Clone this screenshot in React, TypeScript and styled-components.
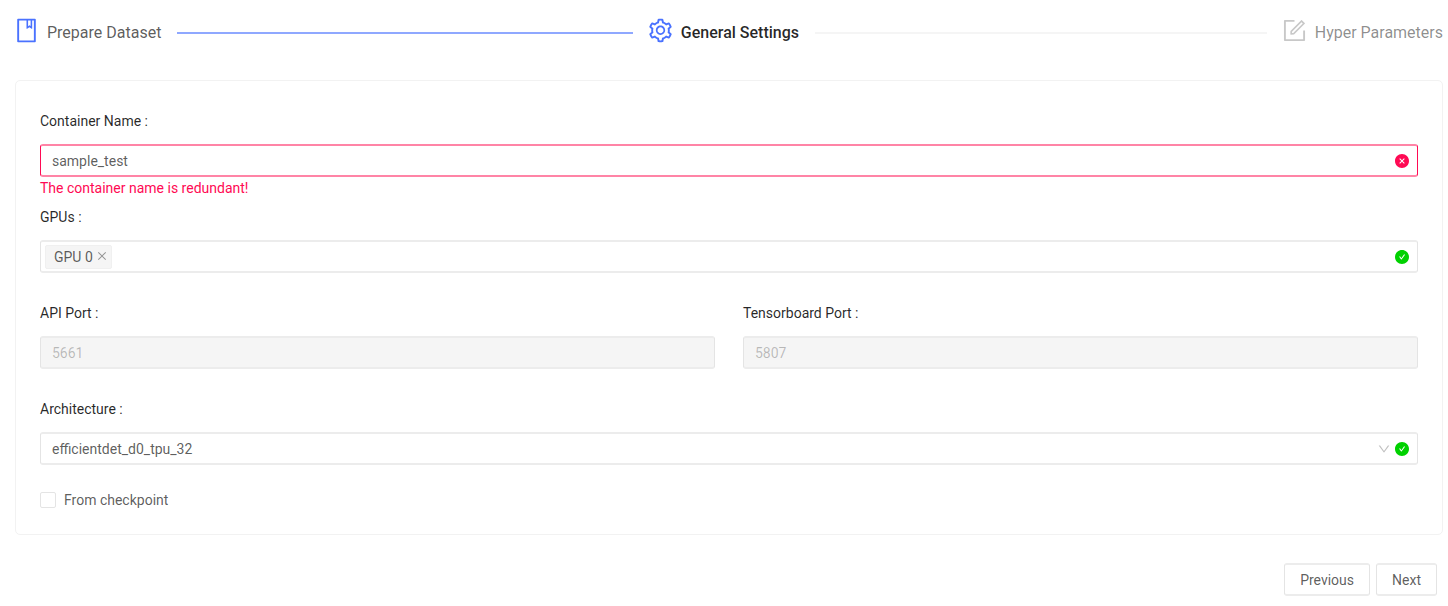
import React from 'react'
import styled, { createGlobalStyle } from 'styled-components'
import {
    AiFillCheckCircle,
    AiFillCloseCircle,
    AiOutlineBook,
    AiOutlineClose,
    AiOutlineDown,
    AiOutlineForm,
    AiOutlineSetting,
} from 'react-icons/ai'

const GlobalStyle = createGlobalStyle`
    * { box-sizing: border-box; }
    body {
        margin: 0;
        background: #fff;
        font-family: Roboto, "Liberation Sans", sans-serif;
        font-size: 14px;
        line-height: 22px;
        color: rgba(0, 0, 0, 0.65);
    }
`

const Page = styled.div`
    width: 1448px;
    height: 606px;
    padding: 17px 5px 0 15px;
    overflow: hidden;
`

const Steps = styled.div`
    display: flex;
    height: 32px;
    margin: 0 0 31px -2px;
`

const Step = styled.div<{ $last?: boolean }>`
    display: flex;
    align-items: flex-start;
    flex: ${p => (p.$last ? 'none' : '1')};
    min-width: 0;
`

const StepIcon = styled.span<{ $active: boolean }>`
    display: flex;
    font-size: 27px;
    margin-right: 7px;
    color: ${p => (p.$active ? '#4a72ff' : '#c8c8c8')};
`

const StepTitle = styled.span<{ $state: 'done' | 'current' | 'todo' }>`
    font-size: 16px;
    line-height: 32px;
    white-space: nowrap;
    font-weight: ${p => (p.$state === 'current' ? 500 : 400)};
    color: ${p =>
        p.$state === 'current' ? 'rgba(0, 0, 0, 0.85)' : p.$state === 'done' ? 'rgba(0, 0, 0, 0.65)' : 'rgba(0, 0, 0, 0.45)'};
`

const StepLine = styled.div<{ $done: boolean }>`
    flex: 1;
    height: 2px;
    margin: 15px 14px 0 16px;
    background: ${p => (p.$done ? '#8fa8ff' : '#f5f5f5')};
`

const Card = styled.div`
    width: 1428px;
    height: 455px;
    padding: 24px;
    background: #fff;
    border: 1px solid #f2f2f2;
    border-radius: 5px;
`

const Field = styled.div<{ $tight?: boolean }>`
    margin-bottom: ${p => (p.$tight ? 0 : '24px')};
`

const Label = styled.div`
    height: 32px;
    margin-bottom: 7px;
    display: flex;
    align-items: center;
    color: rgba(0, 0, 0, 0.85);
`

// the top and bottom edges straddle two pixel rows in the reference, hence 2px and 33px
const InputBox = styled.div<{ $status?: 'error' | 'success'; $disabled?: boolean }>`
    display: flex;
    align-items: center;
    height: 33px;
    padding: 1px 7px 0 11px;
    border-style: solid;
    border-width: 2px 1px;
    border-color: ${p => (p.$status === 'error' ? '#ff84a6 #ff0a54' : '#ececec #e4e4e4')};
    border-radius: 3px;
    background: ${p => (p.$disabled ? '#f5f5f5' : '#fff')};
    color: ${p => (p.$disabled ? 'rgba(0, 0, 0, 0.25)' : 'rgba(0, 0, 0, 0.65)')};
`

const BoxText = styled.span`
    flex: 1;
`

const TagList = styled.div`
    flex: 1;
    display: flex;
    margin-left: -7px;
`

const Tag = styled.span`
    display: flex;
    align-items: center;
    height: 24px;
    padding: 0 3px 0 8px;
    background: #f5f5f5;
    border: 1px solid #f0f0f0;
    border-radius: 2px;
    svg {
        margin: 0 0 3px 3px;
        font-size: 12px;
        color: rgba(0, 0, 0, 0.4);
    }
`

const StatusIcon = styled.span<{ $error?: boolean }>`
    display: flex;
    font-size: 16px;
    color: ${p => (p.$error ? '#ff0a54' : '#00d100')};
`

const Arrow = styled.span`
    display: flex;
    margin-right: 3px;
    font-size: 14px;
    color: rgba(0, 0, 0, 0.25);
`

const ErrorText = styled.div`
    height: 24px;
    color: #ff0a54;
`

const Columns = styled.div`
    display: grid;
    grid-template-columns: 1fr 1fr;
    column-gap: 28px;
`

const CheckRow = styled.label`
    display: flex;
    align-items: center;
    height: 22px;
`

const CheckBox = styled.span`
    width: 16px;
    height: 16px;
    margin-right: 8px;
    border: 1px solid #e4e4e4;
    border-radius: 2px;
`

const Footer = styled.div`
    display: flex;
    justify-content: flex-end;
    gap: 6px;
    margin-top: 28px;
    padding-right: 6px;
`

const Button = styled.button`
    height: 33px;
    padding: 0 15px;
    font: inherit;
    background: #fff;
    color: rgba(0, 0, 0, 0.65);
    border-style: solid;
    border-width: 2px 1px;
    border-color: #ececec #e4e4e4;
    border-radius: 3px;
`

const App: React.FC = () => (
    <Page>
        <GlobalStyle />
        <Steps>
            <Step>
                <StepIcon $active><AiOutlineBook /></StepIcon>
                <StepTitle $state="done">Prepare Dataset</StepTitle>
                <StepLine $done />
            </Step>
            <Step>
                <StepIcon $active><AiOutlineSetting /></StepIcon>
                <StepTitle $state="current">General Settings</StepTitle>
                <StepLine $done={false} />
            </Step>
            <Step $last>
                <StepIcon $active={false}><AiOutlineForm /></StepIcon>
                <StepTitle $state="todo">Hyper Parameters</StepTitle>
            </Step>
        </Steps>
        <Card>
            <Field $tight>
                <Label>Container Name :</Label>
                <InputBox $status="error">
                    <BoxText>sample_test</BoxText>
                    <StatusIcon $error><AiFillCloseCircle /></StatusIcon>
                </InputBox>
                <ErrorText>The container name is redundant!</ErrorText>
            </Field>
            <Field>
                <Label>GPUs :</Label>
                <InputBox $status="success">
                    <TagList>
                        <Tag>GPU 0<AiOutlineClose /></Tag>
                    </TagList>
                    <StatusIcon><AiFillCheckCircle /></StatusIcon>
                </InputBox>
            </Field>
            <Columns>
                <Field>
                    <Label>API Port :</Label>
                    <InputBox $disabled><BoxText>5661</BoxText></InputBox>
                </Field>
                <Field>
                    <Label>Tensorboard Port :</Label>
                    <InputBox $disabled><BoxText>5807</BoxText></InputBox>
                </Field>
            </Columns>
            <Field>
                <Label>Architecture :</Label>
                <InputBox $status="success">
                    <BoxText>efficientdet_d0_tpu_32</BoxText>
                    <Arrow><AiOutlineDown /></Arrow>
                    <StatusIcon><AiFillCheckCircle /></StatusIcon>
                </InputBox>
            </Field>
            <CheckRow>
                <CheckBox />
                From checkpoint
            </CheckRow>
        </Card>
        <Footer>
            <Button>Previous</Button>
            <Button>Next</Button>
        </Footer>
    </Page>
)

export default App
